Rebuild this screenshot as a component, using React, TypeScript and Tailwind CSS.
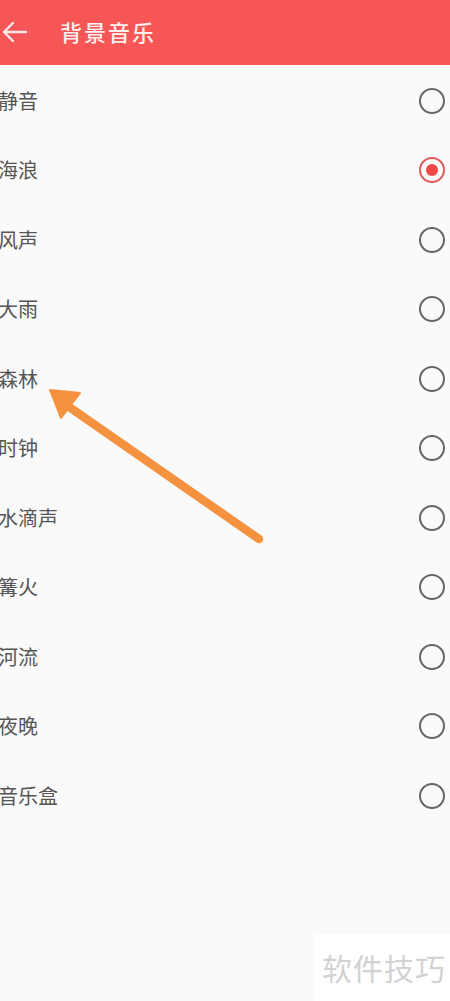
import React from 'react'

const sounds = ['静音', '海浪', '风声', '大雨', '森林', '时钟', '水滴声', '篝火', '河流', '夜晚', '音乐盒']

export default function App() {
  const selected = '海浪'

  return (
    <div
      className="relative w-[450px] h-[1001px] overflow-hidden bg-[#fafafa]"
      style={{ fontFamily: '"Noto Sans CJK SC", "Noto Sans", sans-serif' }}
    >
      {/* Header */}
      <div className="flex h-[65px] items-center bg-[#f65656]">
        <svg width="28" height="24" viewBox="0 0 28 24" className="ml-[1px] mt-[-2px]" fill="none">
          <path d="M25 12H3M12 3L3 12l9 9" stroke="#fde8e8" strokeWidth="2.4" strokeLinecap="round" strokeLinejoin="round" />
        </svg>
        <span className="ml-[31px] mt-[-2px] text-[22px] font-medium tracking-[2px] text-[#fdf0f0]">背景音乐</span>
      </div>

      {/* List */}
      <div className="flex flex-col pt-[1px]">
        {sounds.map((name) => (
          <div key={name} className="flex h-[69.5px] items-center justify-between">
            <span className="ml-[-2px] text-[20px] text-[#555555]">{name}</span>
            <div className="mr-[5px] flex h-[27px] w-[27px] items-center justify-center">
              {name === selected ? (
                <div className="flex h-[26px] w-[26px] items-center justify-center rounded-full border-[2.5px] border-[#e05a5a]">
                  <div className="h-[12px] w-[12px] rounded-full bg-[#f04848]" />
                </div>
              ) : (
                <div className="h-[26px] w-[26px] rounded-full border-[2.5px] border-[#666666]" />
              )}
            </div>
          </div>
        ))}
      </div>

      {/* Annotation arrow */}
      <svg className="absolute left-0 top-0" width="450" height="1001" viewBox="0 0 450 1001">
        <line x1="259" y1="539" x2="62" y2="402" stroke="#f59240" strokeWidth="8.5" strokeLinecap="round" />
        <polygon points="50,390 80,393 61,418" fill="#f59240" stroke="#f59240" strokeWidth="2" strokeLinejoin="round" />
      </svg>

      {/* Watermark */}
      <div className="absolute bottom-0 right-0 flex h-[67px] w-[135px] items-center justify-center bg-white">
        <span className="ml-[3px] text-[30px] tracking-[1px] text-[#d2d2d2]">软件技巧</span>
      </div>
    </div>
  )
}
